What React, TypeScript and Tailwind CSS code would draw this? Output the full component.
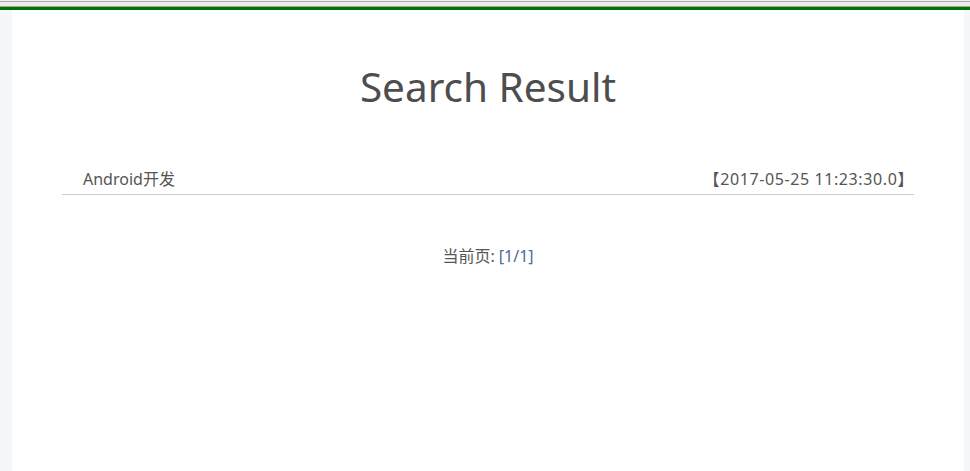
import React from 'react';

const font = { fontFamily: '"Noto Sans", "Noto Sans CJK SC", sans-serif' };

export default function App() {
  return (
    <div className="w-[970px] h-[471px] bg-[#f6f7f9] flex flex-col overflow-hidden" style={font}>
      <div className="h-px bg-[#f2f2f2]" />
      <div className="h-px bg-[#a9a9a9]" />
      <div className="h-[4px] bg-[#ececec]" />
      <div className="h-px bg-[#a0a0a0]" />
      <div className="h-[3px] bg-[#007400]" />
      <div className="flex-1 mx-[12px] mr-[6px] bg-white px-[50px]">
        <h1 className="text-center text-[40.5px] leading-none text-[#4d4d4d] pt-[57px]">Search Result</h1>
        <div className="mt-[59px] flex justify-between items-end pl-[21px] pb-[3px] border-b border-[#cccccc] text-[16px] text-[#555]">
          <span>Android开发</span>
          <span className="tracking-[0.6px]">【2017-05-25 11:23:30.0】</span>
        </div>
        <div className="mt-[49px] text-center text-[16px] text-[#555]">
          当前页: <span className="text-[#4a6d96]">[1/1]</span>
        </div>
      </div>
    </div>
  );
}
